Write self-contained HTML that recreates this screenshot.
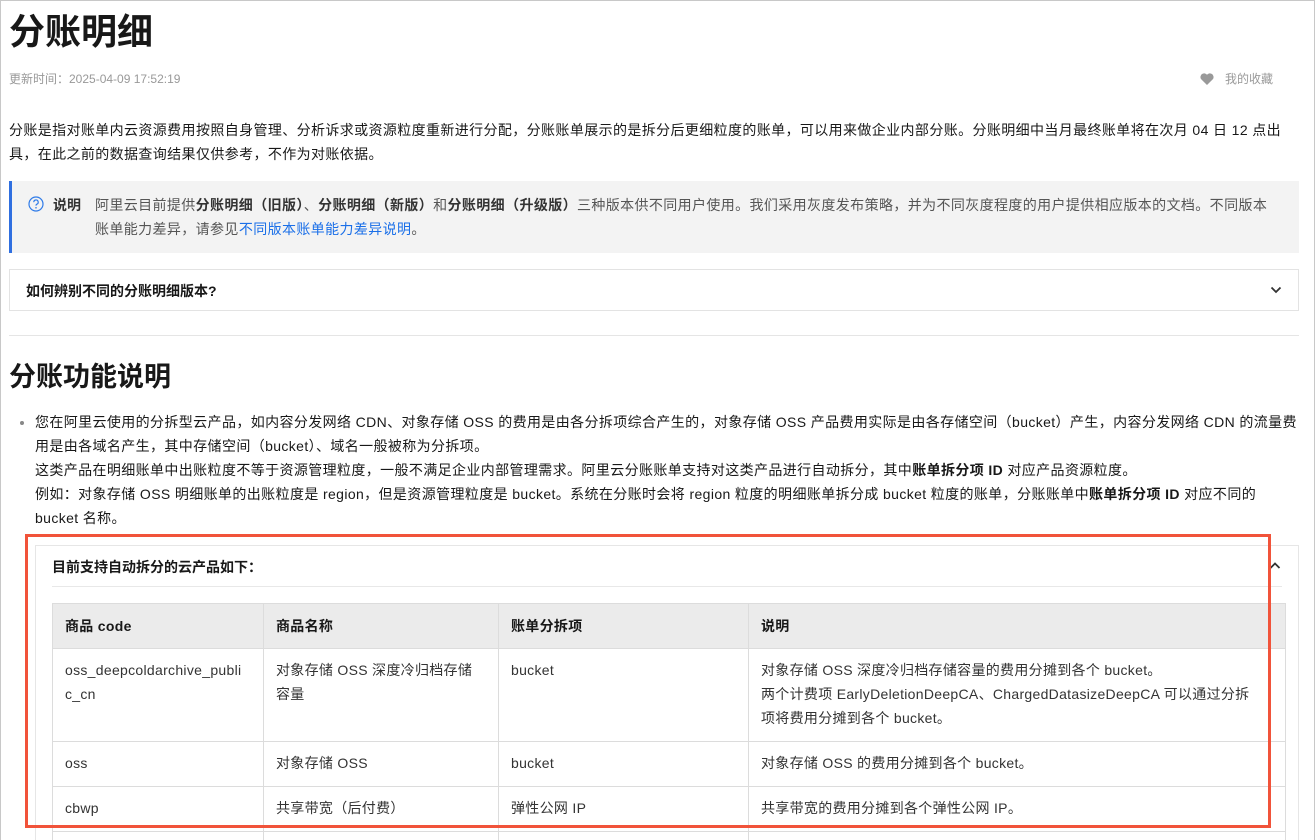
<!DOCTYPE html>
<html><head><meta charset="utf-8">
<style>
*{margin:0;padding:0;box-sizing:border-box}
html,body{width:1316px;height:840px;overflow:hidden;background:#fff}
body{font-family:"Liberation Sans","Noto Sans CJK SC",sans-serif;color:#181818;position:relative}
.frame{position:absolute;left:0;top:0;width:1315px;height:842px;border:1px solid #c8c8c8}
.abs{position:absolute;white-space:nowrap}
h1{position:absolute;left:9px;top:10px;font-size:36px;font-weight:bold;line-height:44px;color:#181818}
.time{left:9px;top:71px;font-size:12px;color:#999;line-height:16px}
.fav{left:1200px;top:71px;font-size:12px;color:#999;line-height:16px}
.ls{letter-spacing:0.38px}
.p{left:9px;top:118px;font-size:14px;line-height:24px;color:#181818}
.note{position:absolute;left:9px;top:181px;width:1290px;height:72px;background:#f3f3f3;border-left:3px solid #2f6fe0}
.note .t{position:absolute;left:83px;top:12px;font-size:14px;line-height:24px;color:#555;white-space:nowrap}
.note b{color:#333}
.note a{color:#1a6fe8;text-decoration:none}
.coll{position:absolute;left:9px;top:269px;width:1290px;height:42px;border:1px solid #e3e3e3}
.hr{position:absolute;left:9px;top:335px;width:1290px;height:1px;background:#e5e5e5}
h2{position:absolute;left:9px;top:360px;font-size:27px;font-weight:bold;line-height:34px}
.ul{left:35px;top:410px;font-size:14px;line-height:24px;color:#181818}
.dot{position:absolute;left:20px;top:421px;width:4px;height:4px;border-radius:50%;background:#888}
.panel{position:absolute;left:35px;top:545px;width:1264px;height:300px;border:1px solid #e6e6e6}
table{position:absolute;left:52px;top:603px;border-collapse:collapse;font-size:14px;line-height:24px;color:#333;letter-spacing:0.3px}
td,th{border:1px solid #dcdcdc;padding:9px 12px;vertical-align:top;text-align:left}
th{background:#ebebeb;font-weight:bold;padding:10px 12px;color:#181818}
.red{position:absolute;left:25px;top:534px;width:1246px;height:294px;border:3px solid #f1533a}
</style></head><body>
<div class="frame"></div>
<h1>分账明细</h1>
<div class="abs time">更新时间：2025-04-09 17:52:19</div>
<svg style="position:absolute;left:1200px;top:73px" width="14" height="12" viewBox="0 0 14 12"><path d="M7 12L1.2 6.3A3.3 3.3 0 0 1 7 1.8A3.3 3.3 0 0 1 12.8 6.3Z" fill="#999"/></svg>
<div class="abs fav" style="left:1225px">我的收藏</div>
<div class="abs p ls">分账是指对账单内云资源费用按照自身管理、分析诉求或资源粒度重新进行分配，分账账单展示的是拆分后更细粒度的账单，可以用来做企业内部分账。分账明细中当月最终账单将在次月 04 日 12 点出<br>具，在此之前的数据查询结果仅供参考，不作为对账依据。</div>
<div class="note">
<svg style="position:absolute;left:16px;top:15px" width="16" height="16" viewBox="0 0 16 16"><circle cx="8" cy="8" r="7" fill="none" stroke="#2f7be8" stroke-width="1.2"/><path d="M5.8 6.2a2.2 2.2 0 1 1 3 2c-.6.3-.8.7-.8 1.4" fill="none" stroke="#2f7be8" stroke-width="1.2"/><circle cx="8" cy="11.8" r=".8" fill="#2f7be8"/></svg>
<div style="position:absolute;left:41px;top:12px;font-size:14px;line-height:24px;font-weight:bold;color:#333">说明</div>
<div class="t ls">阿里云目前提供<b>分账明细（旧版）</b>、<b>分账明细（新版）</b>和<b>分账明细（升级版）</b>三种版本供不同用户使用。我们采用灰度发布策略，并为不同灰度程度的用户提供相应版本的文档。不同版本<br>账单能力差异，请参见<a>不同版本账单能力差异说明</a>。</div>
</div>
<div class="coll"><div class="abs" style="left:16px;top:11px;font-size:14px;font-weight:bold;line-height:20px">如何辨别不同的分账明细版本?</div>
<svg style="position:absolute;left:1260px;top:15px" width="12" height="10" viewBox="0 0 12 10"><path d="M1.5 2.5L6 7L10.5 2.5" fill="none" stroke="#333" stroke-width="1.8"/></svg></div>
<div class="hr"></div>
<h2>分账功能说明</h2>
<div class="dot"></div>
<div class="abs ul ls">您在阿里云使用的分拆型云产品，如内容分发网络 CDN、对象存储 OSS 的费用是由各分拆项综合产生的，对象存储 OSS 产品费用实际是由各存储空间（bucket）产生，内容分发网络 CDN 的流量费<br>用是由各域名产生，其中存储空间（bucket）、域名一般被称为分拆项。<br>这类产品在明细账单中出账粒度不等于资源管理粒度，一般不满足企业内部管理需求。阿里云分账账单支持对这类产品进行自动拆分，其中<b>账单拆分项 ID</b> 对应产品资源粒度。<br>例如：对象存储 OSS 明细账单的出账粒度是 region，但是资源管理粒度是 bucket。系统在分账时会将 region 粒度的明细账单拆分成 bucket 粒度的账单，分账账单中<b>账单拆分项 ID</b> 对应不同的<br>bucket 名称。</div>
<div class="panel">
<div class="abs" style="left:16px;top:11px;font-size:14px;font-weight:bold;line-height:20px">目前支持自动拆分的云产品如下：</div>
<svg style="position:absolute;left:1233px;top:15px" width="12" height="10" viewBox="0 0 12 10"><path d="M1.5 7L6 2.5L10.5 7" fill="none" stroke="#333" stroke-width="1.8"/></svg>
<div style="position:absolute;left:16px;top:40px;width:1230px;height:1px;background:#e8e8e8"></div>
</div>
<table>
<tr style="height:45px"><th style="width:211px">商品 code</th><th style="width:235px">商品名称</th><th style="width:250px">账单分拆项</th><th style="width:537px">说明</th></tr>
<tr style="height:93px"><td>oss_deepcoldarchive_publi<br>c_cn</td><td>对象存储 OSS 深度冷归档存储<br>容量</td><td>bucket</td><td>对象存储 OSS 深度冷归档存储容量的费用分摊到各个 bucket。<br>两个计费项 EarlyDeletionDeepCA、ChargedDatasizeDeepCA 可以通过分拆<br>项将费用分摊到各个 bucket。</td></tr>
<tr style="height:45px"><td>oss</td><td>对象存储 OSS</td><td>bucket</td><td>对象存储 OSS 的费用分摊到各个 bucket。</td></tr>
<tr style="height:45px"><td>cbwp</td><td>共享带宽（后付费）</td><td>弹性公网 IP</td><td>共享带宽的费用分摊到各个弹性公网 IP。</td></tr>
<tr style="height:45px"><td></td><td></td><td></td><td></td></tr>
</table>
<div class="red"></div>
</body></html>
